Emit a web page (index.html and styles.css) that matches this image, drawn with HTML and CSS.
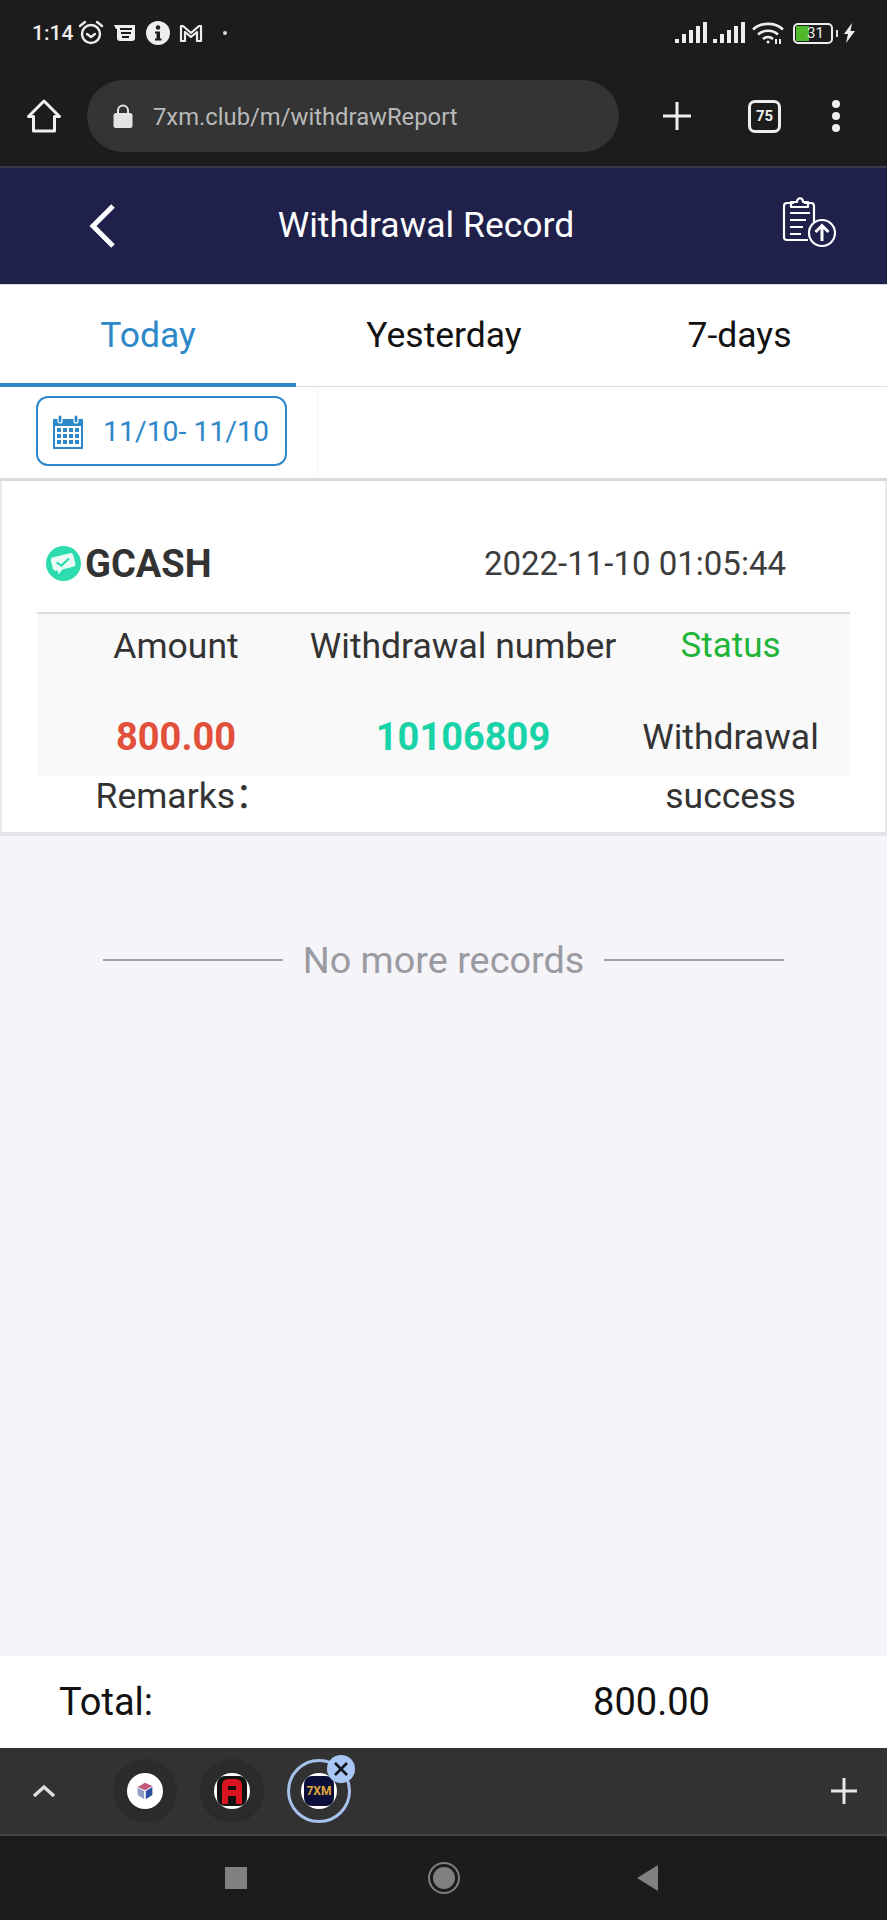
FILE: index.html
```html
<!DOCTYPE html>
<html lang="en">
  <head>
    <meta charset="UTF-8" />
    <meta name="viewport" content="width=device-width, initial-scale=1.0" />
    <title>Withdrawal Record</title>
    <link rel="stylesheet" href="styles.css">
  </head>
  <body>
    <div class="phone">
      <!-- Status bar -->
      <div class="status-bar">
        <div class="status-left">
          <span class="time">1:14</span>
          <svg class="alarm" width="26" height="26" viewBox="0 0 26 26" fill="none" stroke="#eee" stroke-width="2.4">
            <circle cx="13" cy="14" r="9"/>
            <path d="M9 14l4 3 4-3M2 6l5-4M24 6l-5-4" stroke-linecap="round"/>
          </svg>
          <svg class="note" width="22" height="18" viewBox="0 0 22 18">
            <path d="M0 1h21v13a3 3 0 0 1-3 3H6a3 3 0 0 1-3-3V5H2z" fill="#eee"/>
            <path d="M6 5h12M7 9h10M8 13h7" stroke="#1c1c1c" stroke-width="2"/>
          </svg>
          <svg class="info" width="24" height="24" viewBox="0 0 24 24">
            <circle cx="12" cy="12" r="12" fill="#eee"/>
            <circle cx="12" cy="6.5" r="2.2" fill="#1c1c1c"/>
            <path d="M9 10.500h5v7h1.500v2h-6.500v-2h1.500v-5h-1.500z" fill="#1c1c1c"/>
          </svg>
          <svg class="mail" width="24" height="20" viewBox="0 0 24 20" fill="none" stroke="#eee" stroke-width="2.200">
            <path d="M2 18V3h2l8 7 8-7h2v15h-4V9l-6 5-6-5v9z" stroke-linejoin="round"/>
          </svg>
          <span class="dot"></span>
        </div>
        <div class="status-right">
          <svg width="32" height="22" viewBox="0 0 32 22" fill="#eee">
            <path d="M0 17h4v4H0zM7 12h4v9H7zM14 8h4v13h-4zM21 4h4v17h-4zM28 0h4v21h-4z"/>
          </svg>
          <svg width="32" height="22" viewBox="0 0 32 22" fill="#eee">
            <path d="M0 17h4v4H0zM7 12h4v9H7zM14 8h4v13h-4zM21 4h4v17h-4zM28 0h4v21h-4z"/>
          </svg>
          <svg class="wifi" width="32" height="22" viewBox="0 0 32 22" fill="none" stroke="#eee" stroke-width="2.600">
            <path d="M1 7.500c8-7.500 22-7.500 30 0M6 12.500c5.500-5 14.500-5 20 0M11 17c3-2.500 7-2.500 10 0"/>
            <circle cx="16" cy="20" r="1.500" fill="#eee" stroke="none"/>
            <path d="M24 22v-5M28 22v-5" stroke-width="2"/>
          </svg>
          <div class="battery">
            <div class="battery-fill"></div>
            <span class="battery-num">31</span>
          </div>
          <span class="battery-tip"></span>
          <svg width="11" height="20" viewBox="0 0 11 20" fill="#eee">
            <path d="M8 0L0 11h4l-2 9 9-12H6.500z"/>
          </svg>
        </div>
      </div>

      <!-- Browser toolbar -->
      <div class="toolbar">
        <svg class="home-icon" width="34" height="34" viewBox="0 0 34 34" fill="none" stroke="#f0f0f0" stroke-width="3" stroke-linejoin="round">
          <path d="M1.500 17.500L17 2l15.500 15.500H27.500V32h-21V17.500z"/>
        </svg>
        <div class="url-bar">
          <svg class="lock" width="20" height="24" viewBox="0 0 20 24">
            <path d="M5 10V6.500a5 5 0 0 1 10 0V10" fill="none" stroke="#e4e4e4" stroke-width="2"/>
            <rect x="0.500" y="9" width="19" height="15" rx="2.500" fill="#e4e4e4"/>
          </svg>
          <span class="url-text">7xm.club/m/withdrawReport</span>
        </div>
        <svg class="new-tab" width="30" height="30" viewBox="0 0 30 30" stroke="#f0f0f0" stroke-width="3">
          <path d="M15 1v28M1 15h28"/>
        </svg>
        <div class="tab-count">75</div>
        <div class="menu-dots">
          <span></span>
          <span></span>
          <span></span>
        </div>
      </div>

      <!-- Page header -->
      <div class="page-header">
        <svg class="back" width="28" height="44" viewBox="0 0 28 44" fill="none" stroke="#fff" stroke-width="5">
          <path d="M25 2L5 22l20 20"/>
        </svg>
        <div class="page-title">Withdrawal Record</div>
        <svg class="report-icon" width="54" height="52" viewBox="0 0 54 52" fill="none" stroke="#fff" stroke-width="2.200">
          <path d="M12 7H5a3 3 0 0 0-3 3v31a3 3 0 0 0 3 3h21M32 26V10a3 3 0 0 0-3-3h-7"/>
          <path d="M12 11V6h6c0-5 6-5 6 0h5v5z" transform="translate(-3 0)" stroke-linejoin="round"/>
          <path d="M8 17h20M8 24h16M8 31h13M8 38h11"/>
          <circle cx="40" cy="37" r="13"/>
          <path d="M40 45V30M33.500 36l6.500-6.500 6.500 6.500" stroke-width="3"/>
        </svg>
      </div>

      <!-- Tabs -->
      <div class="tabs">
        <div class="tab tab-active">Today</div>
        <div class="tab">Yesterday</div>
        <div class="tab">7-days</div>
      </div>

      <div class="date-row">
        <div class="date-cell">
          <div class="date-btn">
            <svg width="32" height="35" viewBox="0 0 32 35">
              <path d="M1 5h30v30H1z" fill="#2d88c9"/>
              <rect x="6" y="1" width="4" height="8" rx="2" fill="#2d88c9" stroke="#fff" stroke-width="1.200"/>
              <rect x="22" y="1" width="4" height="8" rx="2" fill="#2d88c9" stroke="#fff" stroke-width="1.200"/>
              <path d="M3 12h26v21H3z" fill="#fff"/>
              <path d="M5 14h4v4H5zM11 14h4v4h-4zM17 14h4v4h-4zM23 14h4v4h-4zM5 20h4v4H5zM11 20h4v4h-4zM17 20h4v4h-4zM23 20h4v4h-4zM5 26h4v4H5zM11 26h4v4h-4zM17 26h4v4h-4zM23 26h4v4h-4z" fill="#2d88c9"/>
            </svg>
            <span>11/10- 11/10</span>
          </div>
        </div>
      </div>

      <!-- Records -->
      <div class="content">
        <div class="record-card">
          <div class="record-top">
            <div class="channel">
              <svg width="35" height="35" viewBox="0 0 35 35">
                <circle cx="17.500" cy="17.500" r="17.500" fill="#2ddcae"/>
                <g transform="rotate(-14 17.500 17.500)">
                  <path d="M6 12c0-2 1-3 3-3h17c2 0 3 1 3 3v8c0 2-1 3-3 3H15l-5 4 .5-4C8 23 6 22 6 20z" fill="#e9fbf5"/>
                  <path d="M11 15l4 4 9-5" fill="none" stroke="#2ddcae" stroke-width="2.200"/>
                </g>
              </svg>
              <span>GCASH</span>
            </div>
            <div class="record-time">2022-11-10 01:05:44</div>
          </div>
          <div class="record-table">
            <div class="cell">Amount</div>
            <div class="cell number-label">Withdrawal number</div>
            <div class="cell status-label">Status</div>
            <div class="cell amount">800.00</div>
            <div class="cell order-no">10106809</div>
            <div class="cell status-value">Withdrawal<br>success</div>
            <div class="cell remarks">Remarks：</div>
          </div>
        </div>

        <div class="no-more">
          <span class="no-more-line"></span>
          <span>No more records</span>
          <span class="no-more-line"></span>
        </div>
      </div>

      <div class="total-bar">
        <span>Total:</span>
        <span>800.00</span>
      </div>

      <!-- Browser tab strip -->
      <div class="tab-strip">
        <svg class="strip-up" width="24" height="14" viewBox="0 0 24 14" fill="none" stroke="#ddd" stroke-width="3.500">
          <path d="M2 12L12 3l10 9"/>
        </svg>
        <div class="bubbles">
          <div class="bubble">
            <div class="bubble-icon">
              <svg width="18" height="18" viewBox="0 0 22 22">
                <path d="M11 1l9 4-9 5-9-4z" fill="#c05a78"/>
                <path d="M2 7l8 4v10l-8-5z" fill="#8c9cc4"/>
                <path d="M20 6v10l-8 5V11z" fill="#2b4fa0"/>
              </svg>
            </div>
          </div>
          <div class="bubble">
            <div class="bubble-icon icon-a">
              <svg width="30" height="30" viewBox="0 0 30 30">
                <rect width="30" height="30" rx="8" fill="#111"/>
                <path d="M5 28V9a6 6 0 0 1 6-6h8a6 6 0 0 1 6 6v19h-6v-8h-8v8zM11 14h8V10h-8z" fill="#d81420" fill-rule="evenodd"/>
              </svg>
            </div>
          </div>
          <div class="bubble bubble-current">
            <div class="bubble-icon icon-7xm"><span>7XM</span></div>
            <div class="bubble-close">
              <svg width="14" height="14" viewBox="0 0 14 14" stroke="#10131c" stroke-width="2.600">
                <path d="M1 1l12 12M13 1L1 13"/>
              </svg>
            </div>
          </div>
        </div>
        <svg class="strip-plus" width="26" height="26" viewBox="0 0 26 26" stroke="#e8e8e8" stroke-width="3">
          <path d="M13 0v26M0 13h26"/>
        </svg>
      </div>

      <!-- Android nav -->
      <div class="nav-bar">
        <span class="nav-square"></span>
        <span class="nav-circle"><span></span></span>
        <svg width="22" height="26" viewBox="0 0 22 26">
          <path d="M0 13L21 0v26z" fill="#808080"/>
        </svg>
      </div>
    </div>
  </body>
</html>
```

FILE: styles.css
```css
* {
  box-sizing: border-box;
}
body {
  margin: 0;
  font-family: Roboto, "Noto Sans CJK SC", sans-serif;
}
.phone {
  width: 887px;
  height: 1920px;
  display: flex;
  flex-direction: column;
  background-color: #f4f4f9;
  overflow: hidden;
}

/* status bar */
.status-bar {
  height: 66px;
  flex: none;
  background-color: #1c1c1c;
  display: flex;
  justify-content: space-between;
  align-items: center;
  padding: 0 32px;
}
.status-left, .status-right {
  display: flex;
  align-items: center;
}
.time {
  color: #eee;
  font-size: 21px;
  font-weight: 500;
  margin-right: 5px;
}
.alarm {
  margin-right: 10px;
}
.note {
  margin-right: 10px;
}
.info {
  margin-right: 9px;
}
.dot {
  width: 4px;
  height: 4px;
  border-radius: 50%;
  background-color: #ddd;
  margin-left: 20px;
}
.status-right svg {
  margin-left: 6px;
}
.status-right .wifi {
  margin-left: 7px;
}
.battery {
  width: 40px;
  height: 21px;
  margin-left: 9px;
  border: 2px solid #eee;
  border-radius: 5px;
  position: relative;
  color: #eee;
  font-size: 15px;
  line-height: 17px;
  padding-left: 12px;
}
.battery-fill {
  position: absolute;
  left: 1px;
  top: 1px;
  bottom: 1px;
  width: 13px;
  background-color: #52b82c;
}
.battery-num {
  position: relative;
}
.battery-tip {
  width: 2px;
  height: 7px;
  background-color: #ddd;
  margin-left: 3px;
}

/* browser toolbar */
.toolbar {
  height: 102px;
  flex: none;
  background-color: #1c1c1c;
  border-bottom: 2px solid #3b3b48;
  display: flex;
  align-items: center;
  padding: 0 0 0 27px;
}
.url-bar {
  width: 532px;
  height: 72px;
  margin-left: 26px;
  border-radius: 36px;
  background-color: #343434;
  display: flex;
  align-items: center;
  padding-left: 26px;
}
.url-text {
  color: #b9b9b9;
  font-size: 23.800px;
  margin-left: 20px;
  padding-top: 2px;
}
.new-tab {
  margin-left: 43px;
}
.tab-count {
  width: 33px;
  height: 33px;
  margin-left: 56px;
  border: 3px solid #eee;
  border-radius: 7px;
  color: #eee;
  font-size: 15px;
  font-weight: 700;
  display: flex;
  justify-content: center;
  align-items: center;
}
.menu-dots {
  margin-left: 51px;
  display: flex;
  flex-direction: column;
  gap: 4px;
}
.menu-dots span {
  width: 8px;
  height: 8px;
  border-radius: 50%;
  background-color: #eee;
}

/* header */
.page-header {
  height: 117px;
  flex: none;
  background-color: #20214b;
  border-bottom: 1px solid #d8d8e0;
  display: flex;
  align-items: center;
  padding-left: 88px;
}
.page-title {
  width: 620px;
  text-align: center;
  color: #fff;
  font-size: 35.500px;
  margin-bottom: 2px;
}
.report-icon {
  margin-left: 46px;
  margin-bottom: 9px;
}

/* tabs */
.tabs {
  height: 102px;
  flex: none;
  background-color: #fff;
  border-bottom: 1px solid #ddd;
  display: grid;
  grid-template-columns: 296px 296px 1fr;
}
.tab {
  color: #111;
  font-size: 35.500px;
  text-align: center;
  padding-top: 29px;
  margin-bottom: -1px;
}
.tab-active {
  color: #2d88c9;
  border-bottom: 4px solid #2d88c9;
}

.date-row {
  height: 94px;
  flex: none;
  background-color: #fff;
  border-bottom: 3px solid #d9d9d9;
  display: flex;
}
.date-cell {
  width: 318px;
  border-right: 1px solid #f6f6f6;
  padding: 9px 0 0 36px;
}
.date-btn {
  width: 251px;
  height: 70px;
  border: 2px solid #2d88c9;
  border-radius: 12px;
  color: #2d88c9;
  font-size: 28.400px;
  display: flex;
  align-items: center;
  padding-left: 14px;
  gap: 19px;
}

/* record card */
.content {
  flex: 1;
}
.record-card {
  height: 355px;
  background-color: #fff;
  border-left: 2px solid #e9e9ec;
  border-right: 2px solid #e9e9ec;
  border-bottom: 4px solid #e2e3e8;
  padding: 0 35px;
}
.record-top {
  height: 133px;
  border-bottom: 2px solid #dcdcdc;
  display: flex;
  justify-content: space-between;
  align-items: center;
  padding: 34px 64px 0 9px;
}
.channel {
  display: flex;
  align-items: center;
  gap: 4px;
  color: #333;
  font-size: 38px;
  font-weight: 700;
}
.record-time {
  color: #3c3c3c;
  font-size: 33px;
}
.record-table {
  display: grid;
  grid-template-columns: 278px 296px 239px;
  grid-template-rows: 64px 98px 60px;
  background: linear-gradient(#f9f9f9, #f9f9f9) no-repeat;
  background-size: 100% 162px;
}
.cell {
  color: #333;
  font-size: 35.500px;
  text-align: center;
  padding-top: 11px;
  white-space: nowrap;
}
.number-label {
  margin: 0 -10px;
}
.status-label {
  color: #1fb53a;
  font-size: 35px;
}
.amount {
  color: #e2503a;
  font-size: 38px;
  font-weight: 700;
  padding-top: 37px;
}
.order-no {
  color: #18d2a8;
  font-size: 38px;
  font-weight: 700;
  padding-top: 37px;
}
.status-value {
  grid-row: span 2;
  line-height: 59px;
  padding-top: 30px;
}
.remarks {
  grid-column: 1;
  grid-row: 3;
  padding: 0 0 0 14px;
  line-height: 40px;
}

.no-more {
  margin-top: 102px;
  display: flex;
  justify-content: center;
  align-items: center;
  gap: 20px;
  color: #9a9aa2;
  font-size: 37.800px;
}
.no-more-line {
  width: 180px;
  height: 2px;
  background-color: #a0a0a8;
}

/* total */
.total-bar {
  height: 92px;
  flex: none;
  background-color: #fff;
  color: #111;
  font-size: 38px;
  display: flex;
  align-items: center;
  padding-left: 59px;
  gap: 440px;
}

/* browser tab strip */
.tab-strip {
  height: 88px;
  flex: none;
  background-color: #323232;
  border-bottom: 2px solid #444;
  display: flex;
  align-items: center;
  padding-left: 32px;
}
.bubbles {
  display: flex;
  gap: 23px;
  margin-left: 57px;
}
.bubble {
  width: 64px;
  height: 64px;
  border-radius: 50%;
  background-color: #2b2b2b;
  display: flex;
  justify-content: center;
  align-items: center;
  position: relative;
}
.bubble-icon {
  width: 36px;
  height: 36px;
  border-radius: 50%;
  background-color: #fff;
  display: flex;
  justify-content: center;
  align-items: center;
}
.icon-7xm span {
  width: 30px;
  height: 30px;
  border-radius: 8px;
  background-color: #0b0f3a;
  color: #e0a93c;
  font-size: 12px;
  font-weight: 700;
  text-align: center;
  line-height: 30px;
}
.bubble-current {
  background-color: transparent;
  border: 3px solid #a5c1ec;
}
.bubble-close {
  position: absolute;
  top: -7px;
  right: -7px;
  width: 28px;
  height: 28px;
  border-radius: 50%;
  background-color: #a9c7f5;
  display: flex;
  justify-content: center;
  align-items: center;
}
.strip-plus {
  margin-left: auto;
  margin-right: 30px;
}

/* nav */
.nav-bar {
  height: 84px;
  flex: none;
  background-color: #1c1c1c;
  display: flex;
  align-items: center;
  padding: 0 0 0 225px;
}
.nav-square {
  width: 22px;
  height: 22px;
  background-color: #808080;
}
.nav-circle {
  width: 32px;
  height: 32px;
  margin-left: 181px;
  border: 2px solid #808080;
  border-radius: 50%;
  padding: 3px;
}
.nav-circle span {
  display: block;
  width: 100%;
  height: 100%;
  border-radius: 50%;
  background-color: #808080;
}
.nav-bar svg {
  margin-left: 177px;
}
```
